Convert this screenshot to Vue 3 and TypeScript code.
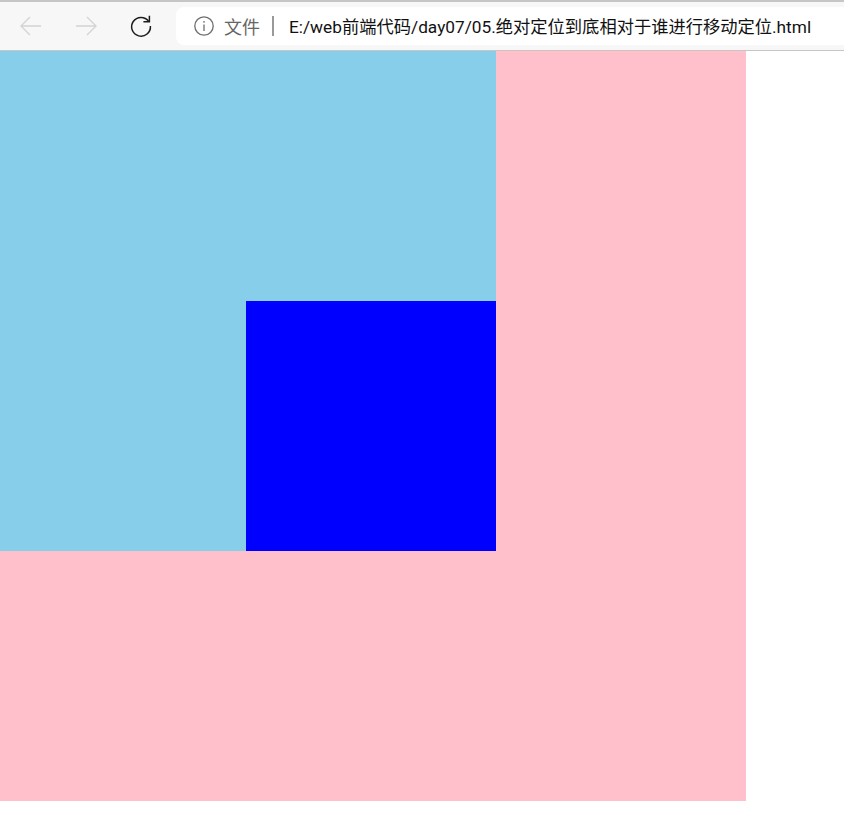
<script setup lang="ts">
const address = 'E:/web前端代码/day07/05.绝对定位到底相对于谁进行移动定位.html'
</script>

<template>
  <div class="page">
    <header class="toolbar">
      <button class="nav-btn first" aria-label="back">
        <svg width="24" height="24" viewBox="0 0 24 24" fill="none" stroke="#d4d4d4" stroke-width="1.4">
          <path d="M22 12H2M11 3l-9 9 9 9" />
        </svg>
      </button>
      <button class="nav-btn" aria-label="forward">
        <svg width="24" height="24" viewBox="0 0 24 24" fill="none" stroke="#d4d4d4" stroke-width="1.4">
          <path d="M2 12h20M13 3l9 9-9 9" />
        </svg>
      </button>
      <button class="nav-btn" aria-label="reload">
        <svg width="24" height="24" viewBox="0 0 24 24" fill="none" stroke="#1c1c1c" stroke-width="1.5">
          <path d="M19.6 7.2A9.4 9.4 0 1 0 21.4 12" />
          <path d="M20.4 1.8v6h-6" />
        </svg>
      </button>
      <div class="address">
        <svg class="info" width="20" height="20" viewBox="0 0 20 20" fill="none" stroke="#6e6e6e" stroke-width="1.3">
          <circle cx="10" cy="10" r="9.2" />
          <path d="M10 8.6v6.4" />
          <path d="M10 5v1.8" />
        </svg>
        <span class="scheme">文件</span>
        <span class="divider"></span>
        <span class="url">{{ address }}</span>
      </div>
    </header>
    <main class="outer">
      <div class="middle">
        <div class="inner"></div>
      </div>
    </main>
  </div>
</template>

<style>
html,
body {
  margin: 0;
  background: #fff;
}
</style>

<style scoped>
.page {
  width: 844px;
  height: 833px;
  overflow: hidden;
  font-family: Roboto, "Noto Sans CJK SC", sans-serif;
}

.toolbar {
  box-sizing: border-box;
  height: 51px;
  display: flex;
  align-items: center;
  padding-bottom: 1px;
  background: #f7f7f7;
  border-top: 2px solid #c6c6c6;
  border-bottom: 1px solid #c6c6c6;
}

.nav-btn {
  width: 24px;
  height: 24px;
  padding: 0;
  margin-right: 31px;
  border: 0;
  background: none;
  display: flex;
}

.nav-btn.first {
  margin-left: 19px;
}

.nav-btn:nth-child(3) {
  margin-right: 23px;
}

.address {
  flex: 1;
  height: 38px;
  display: flex;
  align-items: center;
  padding-left: 18px;
  background: #fff;
  border-radius: 8px 0 0 8px;
  white-space: nowrap;
}

.scheme {
  margin-left: 10px;
  font-size: 18px;
  color: #666;
}

.divider {
  width: 2px;
  height: 20px;
  margin-left: 12px;
  background: #999;
}

.url {
  margin-left: 15px;
  font-size: 17.27px;
  color: #111;
}

.outer {
  width: 746px;
  height: 750px;
  background: pink;
}

.middle {
  width: 496px;
  height: 500px;
  display: flex;
  justify-content: flex-end;
  align-items: flex-end;
  background: skyblue;
}

.inner {
  width: 250px;
  height: 250px;
  background: blue;
}
</style>
